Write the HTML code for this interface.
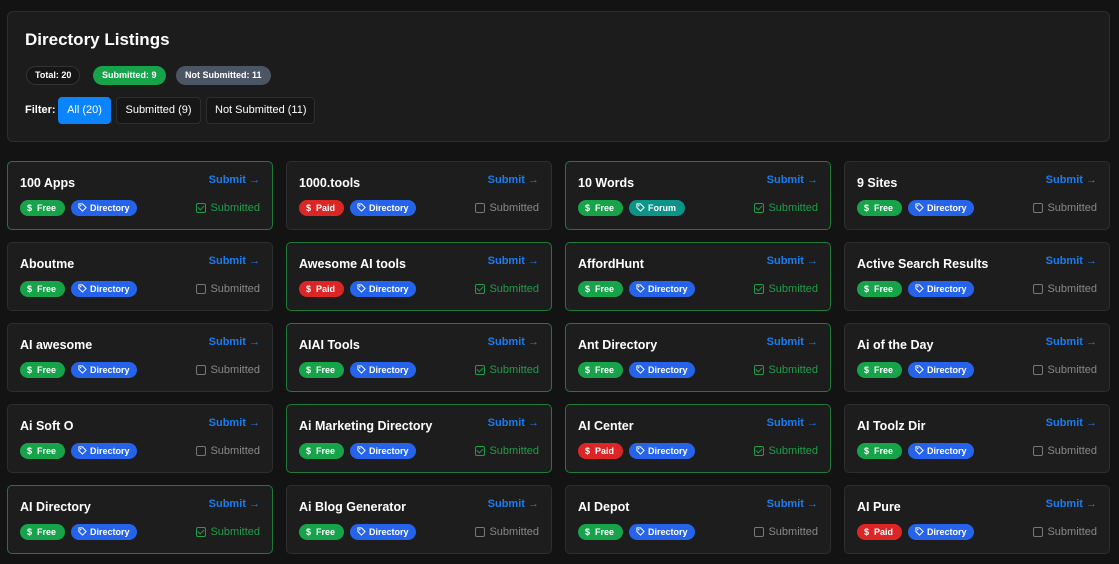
<!DOCTYPE html><html><head><style>
*{box-sizing:border-box;margin:0;padding:0}
body{width:1119px;height:564px;background:#131313;font-family:"Liberation Sans",sans-serif;color:#fff;position:relative;overflow:hidden}
.hdr{position:absolute;left:7px;top:11px;width:1103px;height:131px;background:#1c1c1c;border:1px solid #2e2e2e;border-radius:6px}
h1{position:absolute;left:17px;top:18px;font-size:17px;font-weight:bold}
.pill{position:absolute;top:54px;height:19px;border-radius:10px;font-size:9px;font-weight:bold;line-height:19px;padding:0 9px;white-space:nowrap}
.fb{position:absolute;top:85px;height:27px;border-radius:4px;font-size:11px;line-height:25px;padding:0 8px;border:1px solid #2e2e2e;background:#161616;white-space:nowrap;text-align:center}
.card{position:absolute;width:266px;height:69px;background:#1d1d1d;border:1px solid #2e2e2e;border-radius:5px}
.card.s{border-color:#1f7a3a}
.t{position:absolute;left:12px;top:14px;font-size:12.5px;font-weight:bold;white-space:nowrap}
.sub{position:absolute;right:12px;top:12px;font-size:11px;font-weight:bold;color:#1a7cf0}
.b{position:absolute;top:38px;height:16px;border-radius:8px;font-size:9px;font-weight:bold;line-height:16px;padding:0 7px;white-space:nowrap}
.st{position:absolute;right:12px;top:40px;font-size:11px;color:#888;display:flex;align-items:center;gap:4px}
.st i{display:inline-block;width:10px;height:10px;border:1.5px solid #777;border-radius:2px}
.s .st{color:#1f9d48}
.s .st i{border-color:#1f9d48;position:relative}
.s .st i:after{content:"";position:absolute;left:2px;top:0px;width:3px;height:5px;border:solid #1f9d48;border-width:0 1.5px 1.5px 0;transform:rotate(45deg)}
</style></head><body>
<div class="hdr">
<h1>Directory Listings</h1>
<div class="pill" style="left:18px;border:1px solid #333;background:#161616;line-height:17px;padding:0 8px">Total: 20</div>
<div class="pill" style="left:85px;background:#16a34a">Submitted: 9</div>
<div class="pill" style="left:168px;background:#4b5563">Not Submitted: 11</div>
<div style="position:absolute;left:17px;top:92px;font-size:11px;font-weight:bold">Filter:</div>
<div class="fb" style="left:50px;width:53px;background:#0a84ff;border-color:#0a84ff">All (20)</div>
<div class="fb" style="left:108px;width:85px">Submitted (9)</div>
<div class="fb" style="left:198px;width:109px">Not Submitted (11)</div>
</div>
<div id="g"></div>
<script>
var d=[["100 Apps","F","D",1],["1000.tools","P","D",0],["10 Words","F","R",1],["9 Sites","F","D",0],
["Aboutme","F","D",0],["Awesome AI tools","P","D",1],["AffordHunt","F","D",1],["Active Search Results","F","D",0],
["AI awesome","F","D",0],["AIAI Tools","F","D",1],["Ant Directory","F","D",1],["Ai of the Day","F","D",0],
["Ai Soft O","F","D",0],["Ai Marketing Directory","F","D",1],["AI Center","P","D",1],["AI Toolz Dir","F","D",0],
["AI Directory","F","D",1],["Ai Blog Generator","F","D",0],["AI Depot","F","D",0],["AI Pure","P","D",0]];
var tag='<svg width="9" height="9" viewBox="0 0 10 10" style="vertical-align:-1px;margin-right:3px"><path d="M1 1h4l4 4-4 4-4-4z" fill="none" stroke="#fff" stroke-width="1.1"/><circle cx="3" cy="3" r=".8" fill="#fff"/></svg>';
var h="";d.forEach(function(c,i){var x=7+(i%4)*279,y=161+Math.floor(i/4)*81;
var p=c[1]=="F"?'<div class="b" style="left:12px;width:45px;background:#16a34a">$&nbsp; Free</div>':'<div class="b" style="left:12px;width:45px;background:#dc2626">$&nbsp; Paid</div>';
var k=c[2]=="D"?'<div class="b" style="left:63px;width:66px;background:#2563eb">'+tag+'Directory</div>':'<div class="b" style="left:63px;width:56px;background:#0d9488">'+tag+'Forum</div>';
h+='<div class="card'+(c[3]?' s':'')+'" style="left:'+x+'px;top:'+y+'px"><div class="t">'+c[0]+'</div><div class="sub">Submit &#x2192;</div>'+p+k+'<div class="st"><i></i>Submitted</div></div>';});
document.getElementById("g").innerHTML=h;
</script>
</body></html>
